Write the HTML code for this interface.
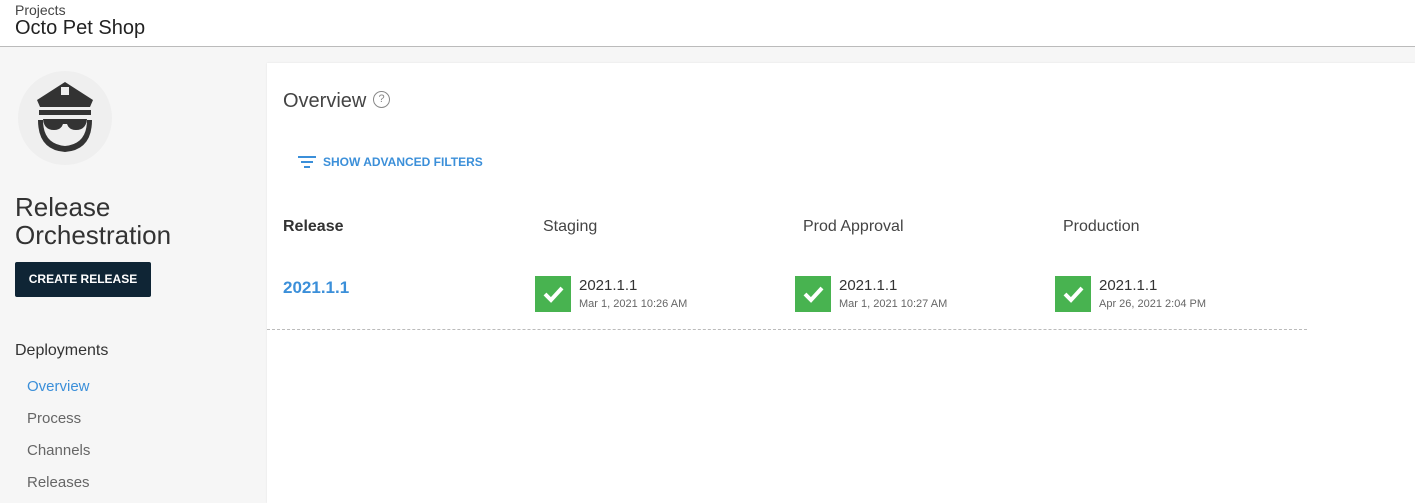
<!DOCTYPE html>
<html><head><style>
*{margin:0;padding:0;box-sizing:border-box}
body{width:1415px;height:498px;overflow:hidden;background:#f6f6f6;font-family:"Liberation Sans",sans-serif;color:#333;position:relative}
.hdr{position:absolute;left:0;top:0;width:1415px;height:47px;background:#fff;border-bottom:1px solid #bbb}
.a{position:absolute;white-space:nowrap}
.card{position:absolute;left:267px;top:63px;width:1148px;height:440px;background:#fff;box-shadow:0 0 2px rgba(0,0,0,.08)}
.chk{position:absolute;width:36px;height:36px;background:#48b350}
.v{font-size:15px;color:#333}
.d{font-size:11px;color:#666}
</style></head><body>
<div class="hdr">
<div class="a" style="left:15px;top:2px;font-size:14px;color:#444">Projects</div>
<div class="a" style="left:15px;top:17px;font-size:20px;color:#222">Octo Pet Shop</div>
</div>
<div class="a" style="left:18px;top:71px;width:94px;height:94px;border-radius:50%;background:#efefef"></div>
<svg class="a" style="left:34px;top:80px" width="62" height="74" viewBox="0 0 62 74">
<path d="M3 20 L31 2 L59 20 L56 27 L6 27 Z" fill="#333"/>
<rect x="27" y="7" width="8" height="8" fill="#eee"/>
<path d="M5 30 H57 V35 H5 Z" fill="#333"/>
<path d="M4 40 Q4 70 31 72 Q58 70 58 40 L53 40 Q53 64 31 66 Q9 64 9 40 Z" fill="#333"/>
<path d="M9 39 H53 Q52 50 42 50 Q35 50 33 44 H29 Q27 50 20 50 Q10 50 9 39 Z" fill="#333"/>
</svg>
<div class="a" style="left:15px;top:193px;font-size:26px;line-height:28px;color:#333">Release<br>Orchestration</div>
<div class="a" style="left:15px;top:262px;width:136px;height:35px;background:#0f2535;color:#fff;font-size:12px;font-weight:bold;text-align:center;line-height:35px;border-radius:2px">CREATE RELEASE</div>
<div class="a" style="left:15px;top:342px;font-size:16px;color:#333">Deployments</div>
<div class="a" style="left:27px;top:378px;font-size:15px;color:#3b8fd9">Overview</div>
<div class="a" style="left:27px;top:410px;font-size:15px;color:#666">Process</div>
<div class="a" style="left:27px;top:442px;font-size:15px;color:#666">Channels</div>
<div class="a" style="left:27px;top:474px;font-size:15px;color:#666">Releases</div>
<div class="card"></div>
<div class="a" style="left:283px;top:90px;font-size:20px;color:#444">Overview</div>
<div class="a" style="left:373px;top:91px;width:17px;height:17px;border:1.5px solid #888;border-radius:50%;font-size:11px;line-height:14px;text-align:center;color:#888">?</div>
<svg class="a" style="left:298px;top:155px" width="18" height="13"><rect x="0" y="1" width="18" height="2" fill="#3b8fd9"/><rect x="3" y="6" width="12" height="2" fill="#3b8fd9"/><rect x="6" y="11" width="6" height="2" fill="#3b8fd9"/></svg>
<div class="a" style="left:323px;top:155px;font-size:12px;font-weight:bold;color:#3b8fd9">SHOW ADVANCED FILTERS</div>
<div class="a" style="left:283px;top:218px;font-size:16px;font-weight:bold;color:#333">Release</div>
<div class="a" style="left:543px;top:218px;font-size:16px;color:#444">Staging</div>
<div class="a" style="left:803px;top:218px;font-size:16px;color:#444">Prod Approval</div>
<div class="a" style="left:1063px;top:218px;font-size:16px;color:#444">Production</div>
<div class="a" style="left:283px;top:278px;font-size:17px;font-weight:bold;color:#3b8fd9">2021.1.1</div>
<div class="chk" style="left:535px;top:276px"></div><svg class="a" style="left:535px;top:276px" width="36" height="36"><path d="M10 18 L16 24 L27 12" stroke="#fff" stroke-width="4" fill="none"/></svg>
<div class="a v" style="left:579px;top:277px">2021.1.1</div><div class="a d" style="left:579px;top:298px">Mar 1, 2021 10:26 AM</div>
<div class="chk" style="left:795px;top:276px"></div><svg class="a" style="left:795px;top:276px" width="36" height="36"><path d="M10 18 L16 24 L27 12" stroke="#fff" stroke-width="4" fill="none"/></svg>
<div class="a v" style="left:839px;top:277px">2021.1.1</div><div class="a d" style="left:839px;top:298px">Mar 1, 2021 10:27 AM</div>
<div class="chk" style="left:1055px;top:276px"></div><svg class="a" style="left:1055px;top:276px" width="36" height="36"><path d="M10 18 L16 24 L27 12" stroke="#fff" stroke-width="4" fill="none"/></svg>
<div class="a v" style="left:1099px;top:277px">2021.1.1</div><div class="a d" style="left:1099px;top:298px">Apr 26, 2021 2:04 PM</div>
<div class="a" style="left:267px;top:329px;width:1040px;border-top:1px dashed #bbb"></div>
</body></html>
